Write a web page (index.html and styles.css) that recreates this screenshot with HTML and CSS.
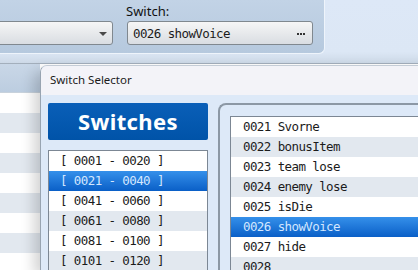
FILE: index.html
```html
<!DOCTYPE html>
<html lang="en">
<head>
  <meta charset="UTF-8" />
  <title>Switch Selector</title>
  <link rel="stylesheet" href="styles.css">
</head>
<body>

  <div class="topbar">
    <div class="props">
      <div class="field field-type">
        <div class="combo combo-select"><span class="arrow"></span></div>
      </div>
      <div class="field field-switch">
        <label>Switch:</label>
        <div class="combo combo-picker">
          <span class="value">0026 showVoice</span>
          <span class="dots" title="..."></span>
        </div>
      </div>
    </div>
  </div>

  <div class="workspace">
    <!-- event list behind the dialog -->
    <div class="table">
      <div class="thead"></div>
      <div class="trow"></div>
      <div class="trow"></div>
      <div class="trow"></div>
      <div class="trow"></div>
      <div class="trow"></div>
      <div class="trow"></div>
      <div class="trow"></div>
      <div class="trow"></div>
      <div class="trow"></div>
    </div>

    <div class="dialog">
      <div class="dialog-title">Switch Selector</div>
      <div class="dialog-body">
        <div class="groups">
          <div class="groups-head">Switches</div>
          <ul class="list">
            <li>[ 0001 - 0020 ]</li>
            <li class="selected">[ 0021 - 0040 ]</li>
            <li>[ 0041 - 0060 ]</li>
            <li>[ 0061 - 0080 ]</li>
            <li>[ 0081 - 0100 ]</li>
            <li>[ 0101 - 0120 ]</li>
          </ul>
        </div>
        <div class="items-frame">
          <ul class="list items">
            <li>0021 Svorne</li>
            <li>0022 bonusItem</li>
            <li>0023 team lose</li>
            <li>0024 enemy lose</li>
            <li>0025 isDie</li>
            <li class="selected">0026 showVoice</li>
            <li>0027 hide</li>
            <li>0028</li>
          </ul>
        </div>
      </div>
    </div>
  </div>

</body>
</html>
```

FILE: styles.css
```css
:root {
  --text: #1b1b1b;
  --row-alt: #e2e8ef;
  --list-border: #7c8794;
  --dialog-bg: #dde9f8;
  --mono: 'DejaVu Sans Mono', monospace;
}

body {
  margin: 0;
  width: 418px;
  height: 270px;
  overflow: hidden;
  font-family: 'Noto Sans', 'Open Sans', sans-serif;
  color: var(--text);
  background: #ffffff;
}

/* top property bar */
.topbar {
  height: 63px;
  border-bottom: 1px solid #a3afbc;
  background: linear-gradient(#dde8f7 0%, #dce7f5 82%, #cdd9e7 100%);
}

.props {
  width: 325px;
  height: 54px;
  box-sizing: border-box;
  padding-top: 2px;
  display: flex;
  align-items: flex-end;
  gap: 14px;
  padding-bottom: 8px;
  background: linear-gradient(#c2d3e6, #b6c9de);
  border-right: 1px solid #eef4fb;
  border-bottom: 1px solid #eef4fb;
  border-bottom-right-radius: 6px;
}

.field {
  display: flex;
  flex-direction: column;
}

.field label {
  font-size: 13px;
  line-height: 20px;
  margin-left: -1px;
  color: #111;
}

.field-type {
  margin-left: -12px;
}

.combo {
  height: 24px;
  box-sizing: border-box;
  border: 1px solid #80888f;
  border-radius: 3px;
  background: linear-gradient(#f6f6f6, #d9dde2);
  display: flex;
  align-items: center;
}

.combo-select {
  width: 125px;
  justify-content: flex-end;
  padding-right: 5px;
}

.arrow {
  width: 0;
  height: 0;
  border-left: 4px solid transparent;
  border-right: 4px solid transparent;
  border-top: 4px solid #4a4a4a;
  margin-top: 1px;
}

.combo-picker {
  width: 186px;
  justify-content: space-between;
  padding: 0 7px 0 5px;
}

.combo-picker .value {
  font-family: var(--mono);
  font-size: 12.5px;
  letter-spacing: -0.6px;
}

/* three small square dots of the "..." button */
.combo-picker .dots {
  width: 2px;
  height: 2px;
  margin-top: 1px;
  background: #333;
  box-shadow: -3px 0 #333, -6px 0 #333;
}

/* lower area */
.workspace {
  display: flex;
  height: 206px;
}

.table {
  width: 40px;
  flex: none;
  overflow: hidden;
}

.thead {
  height: 28px;
  background: linear-gradient(#c9d7e7, #bccde0);
  border-bottom: 1px solid #c8d2dc;
}

.trow {
  height: 20px;
  background: #ffffff;
}

.trow:nth-child(odd) {
  background: var(--row-alt);
}

.dialog {
  flex: none;
  width: 400px;
  margin-top: 1px;
  border-left: 1px solid #98a4b1;
  border-top: 1px solid #c4ccd6;
  border-top-left-radius: 7px;
  background: var(--dialog-bg);
  box-shadow: -6px 6px 14px rgba(0, 0, 0, 0.18);
  overflow: hidden;
  position: relative;
}

.dialog-title {
  height: 29px;
  line-height: 28px;
  padding-left: 9px;
  font-size: 11.5px;
  background: #f3f3f8;
}

.dialog-body {
  display: flex;
  gap: 10px;
  padding: 8px 0 0 7px;
}

.groups {
  width: 160px;
  flex: none;
}

.groups-head {
  height: 37px;
  margin-bottom: 10px;
  border-radius: 2px;
  background: linear-gradient(#0a5fb8, #0053a8);
  color: #ffffff;
  font-weight: bold;
  font-size: 22px;
  line-height: 37px;
  text-align: center;
  letter-spacing: 0.4px;
}

.list {
  list-style: none;
  margin: 0;
  padding: 0;
  border: 1px solid var(--list-border);
  background: #ffffff;
  font-family: var(--mono);
  font-size: 12.5px;
  letter-spacing: -0.6px;
  height: 200px;
}

.list li {
  height: 20px;
  line-height: 20px;
  padding-left: 11px;
  white-space: pre;
}

.list li:nth-child(even) {
  background: var(--row-alt);
}

.list li.selected {
  background: linear-gradient(#3590ea, #0a5fc7);
  color: #d3e7ff;
}

.items-frame {
  flex: 1;
  border: 2px solid #8c98a5;
  border-right: none;
  border-bottom: none;
  border-top-left-radius: 8px;
  padding: 11px 0 0 10px;
}

.items li {
  padding-left: 12px;
}
```
